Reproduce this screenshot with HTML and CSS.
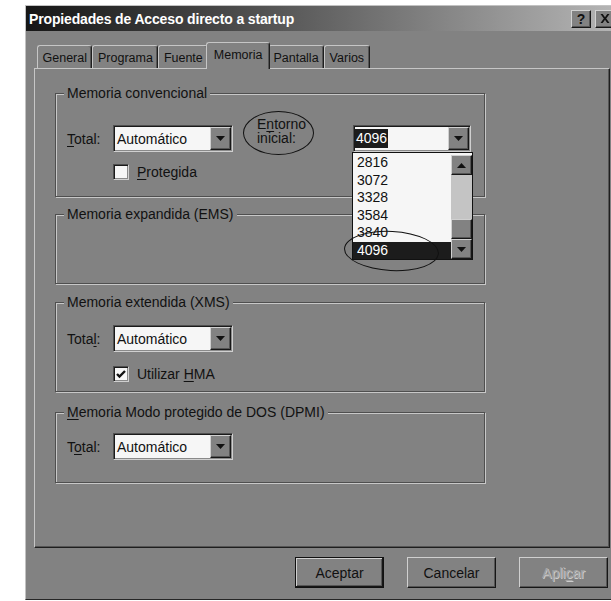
FILE: index.html
```html
<!DOCTYPE html>
<html lang="es">
<head>
<meta charset="utf-8">
<title>Propiedades de Acceso directo a startup</title>
<link rel="stylesheet" href="styles.css">
</head>
<body>
<div class="window">
  <div class="titlebar">
    <span class="title">Propiedades de Acceso directo a startup</span>
    <div class="caption-buttons">
      <span class="cap-btn help">?</span>
      <span class="cap-btn close"><svg width="10" height="9" viewBox="0 0 10 9"><path d="M0.5 0h2.2L5 3.2 7.3 0h2.2L6.2 4.5 9.5 9H7.3L5 5.8 2.7 9H0.5l3.3-4.5z" fill="#111"/></svg></span>
    </div>
  </div>

  <div class="tabs">
    <span class="tab">General</span>
    <span class="tab">Programa</span>
    <span class="tab">Fuente</span>
    <span class="tab active">Memoria</span>
    <span class="tab">Pantalla</span>
    <span class="tab">Varios</span>
  </div>

  <div class="panel">
    <div class="group g-conv">
      <span class="legend">Memoria convencional</span>
      <div class="row row-first">
        <span class="label"><u>T</u>otal:</span>
        <div class="combo">
          <span class="value">Automático</span>
          <span class="drop-btn"><svg width="9" height="5" viewBox="0 0 9 5"><path d="M0 0h9L4.5 5z" fill="#111"/></svg></span>
        </div>
        <span class="label-env">E<u>n</u>torno<br>inicial:<span class="ring ring-env"></span></span>
        <div class="combo combo-env">
          <span class="value"><span class="sel">4096</span></span>
          <span class="drop-btn"><svg width="9" height="5" viewBox="0 0 9 5"><path d="M0 0h9L4.5 5z" fill="#111"/></svg></span>
          <div class="listbox">
            <ul class="items">
              <li>2816</li>
              <li>3072</li>
              <li>3328</li>
              <li>3584</li>
              <li>3840</li>
              <li class="hl">4096</li>
            </ul>
            <div class="vscroll">
              <span class="sb-btn"><svg width="9" height="5" viewBox="0 0 9 5"><path d="M0 5h9L4.5 0z" fill="#111"/></svg></span>
              <span class="sb-track"></span>
              <span class="sb-thumb"></span>
              <span class="sb-btn"><svg width="9" height="5" viewBox="0 0 9 5"><path d="M0 0h9L4.5 5z" fill="#111"/></svg></span>
            </div>
            <span class="ring ring-pick"></span>
          </div>
        </div>
      </div>
      <div class="row row-check">
        <span class="checkbox"></span>
        <span class="check-label"><u>P</u>rotegida</span>
      </div>
    </div>

    <div class="group g-ems">
      <span class="legend">Memoria expandida (EMS)</span>
    </div>

    <div class="group g-xms">
      <span class="legend">Memoria extendida (XMS)</span>
      <div class="row row-combo">
        <span class="label">Tota<u>l</u>:</span>
        <div class="combo">
          <span class="value">Automático</span>
          <span class="drop-btn"><svg width="9" height="5" viewBox="0 0 9 5"><path d="M0 0h9L4.5 5z" fill="#111"/></svg></span>
        </div>
      </div>
      <div class="row row-check">
        <span class="checkbox"><svg width="10" height="9" viewBox="0 0 10 9"><path d="M1 4l2.5 2.5L9 1" fill="none" stroke="#111" stroke-width="2.4"/></svg></span>
        <span class="check-label">Utilizar <u>H</u>MA</span>
      </div>
    </div>

    <div class="group g-dpmi">
      <span class="legend"><u>M</u>emoria Modo protegido de DOS (DPMI)</span>
      <div class="row row-combo">
        <span class="label">T<u>o</u>tal:</span>
        <div class="combo">
          <span class="value">Automático</span>
          <span class="drop-btn"><svg width="9" height="5" viewBox="0 0 9 5"><path d="M0 0h9L4.5 5z" fill="#111"/></svg></span>
        </div>
      </div>
    </div>
  </div>

  <div class="actions">
    <span class="btn default">Aceptar</span>
    <span class="btn">Cancelar</span>
    <span class="btn disabled">Apli<u>c</u>ar</span>
  </div>
</div>
</body>
</html>
```

FILE: styles.css
```css
* {
  box-sizing: border-box;
}

html,
body {
  margin: 0;
}

body {
  width: 611px;
  height: 601px;
  overflow: hidden;
  background: #fff;
  font-family: "Liberation Sans", Arial, sans-serif;
  font-size: 14px;
  color: #111;
}

u {
  text-decoration: underline;
  text-underline-offset: 2px;
}

/* dialog frame */
.window {
  width: 594px;
  height: 595px;
  margin: 5px 0 0 25px;
  display: flex;
  flex-direction: column;
  background: #828282;
  border: 1px solid;
  border-color: #c2c2c2 #262626 #262626 #c2c2c2;
}

/* caption */
.titlebar {
  flex: none;
  height: 25px;
  display: flex;
  align-items: center;
  justify-content: space-between;
  padding: 0 1px 0 3px;
  background: linear-gradient(90deg, #161616 0%, #4a4a4a 35%, #b6b6b6 100%);
  color: #fff;
}

.title {
  font-weight: bold;
  font-size: 14px;
  letter-spacing: -0.15px;
}

.caption-buttons {
  display: flex;
  gap: 4px;
  margin-right: 2px;
}

.cap-btn {
  width: 20px;
  height: 18px;
  display: flex;
  align-items: center;
  justify-content: center;
  background: #828282;
  border: 1px solid;
  border-color: #d2d2d2 #161616 #161616 #d2d2d2;
  box-shadow: inset -1px -1px 0 #555;
  color: #111;
  font-weight: bold;
  font-size: 14px;
}

/* tab strip */
.tabs {
  flex: none;
  position: relative;
  z-index: 1;
  height: 26px;
  margin-top: 11px;
  padding-left: 11px;
  display: flex;
  align-items: flex-end;
  font-size: 12.5px;
}

.tab {
  height: 23px;
  padding: 2px 4.5px 0;
  display: flex;
  align-items: center;
  background: #828282;
  border: 1px solid #c6c6c6;
  border-bottom: none;
  border-right-color: #1e1e1e;
  border-radius: 3px 3px 0 0;
  box-shadow: inset -1px 0 0 #555;
}

.tab.active {
  position: relative;
  z-index: 2;
  height: 27px;
  margin: 0 -2px -1px;
  padding: 0 6.5px 3px;
}

/* property page */
.panel {
  flex: none;
  height: 480px;
  margin: 0 8px;
  padding: 24px 0 0 20px;
  display: flex;
  flex-direction: column;
  border: 1px solid;
  border-color: #c6c6c6 #1e1e1e #1e1e1e #c6c6c6;
  box-shadow: inset -1px -1px 0 #555;
}

/* etched group frames */
.group {
  width: 430px;
  flex: none;
  display: flex;
  flex-direction: column;
  align-items: flex-start;
  padding: 0 10px 0 11px;
  border: 1px solid #4f4f4f;
  box-shadow: inset 1px 1px 0 #c8c8c8, 1px 1px 0 #c8c8c8;
}

.legend {
  line-height: 16px;
  margin: -9px 0 0 -3px;
  padding: 0 3px;
  background: #828282;
}

.g-conv { height: 104px; }
.g-ems  { height: 70px; margin-top: 17px; }
.g-xms  { height: 90px; margin-top: 18px; }
.g-dpmi { height: 71px; margin-top: 20px; }

.row {
  display: flex;
  align-items: center;
}

.row-first { margin-top: 24px; }
.g-conv .row-check { margin-top: 12px; }
.g-xms .row-combo { margin-top: 15px; }
.g-xms .row-check { margin-top: 14px; }
.g-dpmi .row-combo { margin-top: 13px; }

.label {
  width: 46px;
}

/* drop-down combo boxes */
.combo {
  position: relative;
  width: 120px;
  height: 27px;
  display: flex;
  padding: 1px;
  background: #f6f6f6;
  border: 1px solid;
  border-color: #505050 #d0d0d0 #d0d0d0 #505050;
  box-shadow: inset 1px 1px 0 #1a1a1a, inset -1px -1px 0 #8a8a8a;
}

.combo .value {
  flex: 1;
  display: flex;
  align-items: center;
  padding-left: 2px;
}

.drop-btn,
.sb-btn {
  display: flex;
  align-items: center;
  justify-content: center;
  background: #828282;
  border: 1px solid;
  border-color: #d0d0d0 #161616 #161616 #d0d0d0;
  box-shadow: inset -1px -1px 0 #555;
}

.drop-btn {
  width: 21px;
  height: 23px;
}

.label-env {
  position: relative;
  width: 96px;
  margin-left: 24px;
  align-self: flex-start;
  margin-top: -8px;
  line-height: 14px;
}

.combo-env {
  width: 118px;
}

.combo-env .value {
  padding-left: 0;
}

.sel {
  line-height: 19px;
  padding: 0 1px;
  background: #1c1c1c;
  color: #fff;
}

/* open list of the environment combo */
.listbox {
  position: absolute;
  left: -2px;
  top: 26px;
  width: 121px;
  height: 108px;
  display: flex;
  background: #f6f6f6;
  border: 1px solid #111;
  z-index: 3;
}

.items {
  flex: 1;
  margin: 0;
  padding: 1px 0 0;
  list-style: none;
}

.items li {
  height: 17.5px;
  line-height: 17.5px;
  padding-left: 4px;
}

.items li.hl {
  background: #1c1c1c;
  color: #fff;
}

.vscroll {
  width: 21px;
  display: flex;
  flex-direction: column;
  padding-top: 2px;
}

.sb-btn {
  height: 20px;
}

.sb-track {
  flex: 1;
  background: #c4c4c4;
}

.sb-thumb {
  height: 20px;
  background: #828282;
  border: 1px solid;
  border-color: #d0d0d0 #161616 #161616 #d0d0d0;
  box-shadow: inset -1px -1px 0 #555;
}

/* hand-drawn marker rings */
.ring {
  position: absolute;
  border: 1px solid #111;
  border-radius: 50%;
  pointer-events: none;
}

.ring-env {
  left: -14px;
  top: -6px;
  width: 71px;
  height: 44px;
}

.ring-pick {
  left: -9px;
  top: 78px;
  width: 95px;
  height: 40px;
  transform: rotate(3deg);
}

/* check boxes */
.row-check {
  padding-left: 46px;
}

.checkbox {
  width: 16px;
  height: 16px;
  display: flex;
  align-items: center;
  justify-content: center;
  background: #f6f6f6;
  border: 1px solid;
  border-color: #4e4e4e #d0d0d0 #d0d0d0 #4e4e4e;
  box-shadow: inset 1px 1px 0 #1a1a1a, inset -1px -1px 0 #8a8a8a;
}

.check-label {
  margin-left: 8px;
}

/* command buttons */
.actions {
  flex: none;
  display: flex;
  gap: 23px;
  margin-top: 9px;
  padding-left: 269px;
}

.btn {
  width: 89px;
  height: 31px;
  display: flex;
  align-items: center;
  justify-content: center;
  background: #828282;
  border: 1px solid;
  border-color: #d0d0d0 #161616 #161616 #d0d0d0;
  box-shadow: inset -1px -1px 0 #555;
}

.btn.default {
  border-color: #111;
  box-shadow: inset -1px -1px 0 #161616, inset 1px 1px 0 #d0d0d0, inset -2px -2px 0 #555;
}

.btn.disabled {
  color: #a4a4a4;
  text-shadow: 1px 1px 0 #cdcdcd;
}
```
